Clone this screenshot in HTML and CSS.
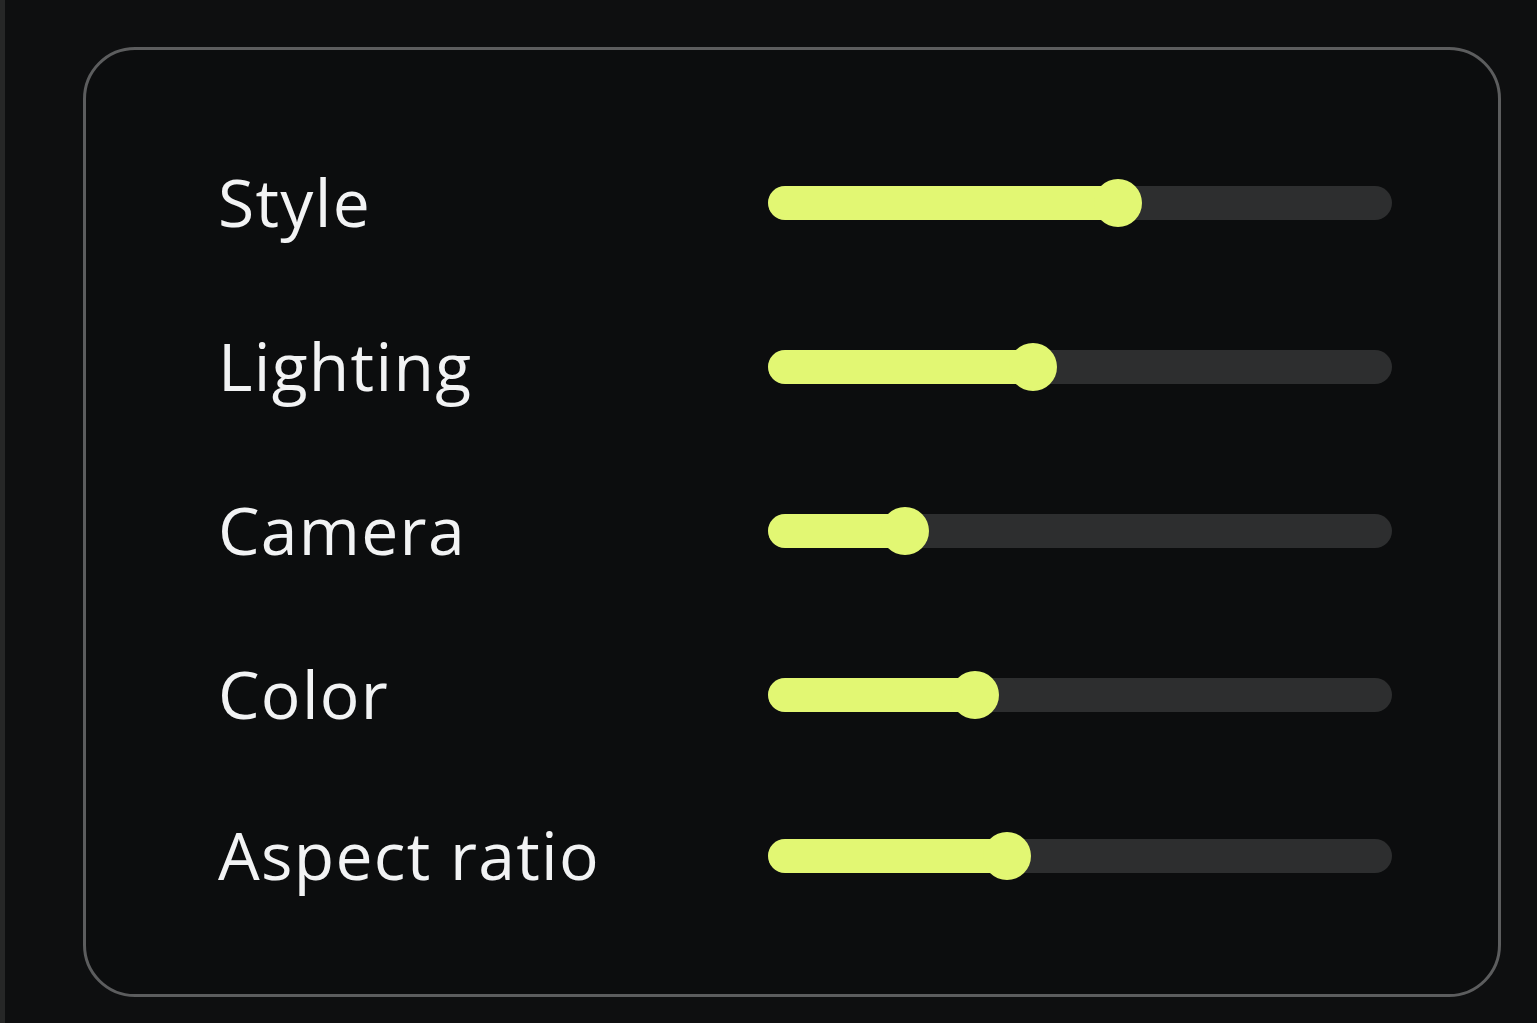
FILE: index.html
```html
<!DOCTYPE html>
<html lang="en">
<head>
<meta charset="utf-8">
<title>Sliders</title>
<link rel="stylesheet" href="styles.css">
</head>
<body>
<div class="page">
  <section class="card">
    <div class="row">
      <span class="label">Style</span>
      <div class="track"><div class="fill" style="width:56.1%"><span class="thumb"></span></div></div>
    </div>
    <div class="row">
      <span class="label">Lighting</span>
      <div class="track"><div class="fill" style="width:42.5%"><span class="thumb"></span></div></div>
    </div>
    <div class="row">
      <span class="label">Camera</span>
      <div class="track"><div class="fill" style="width:22%"><span class="thumb"></span></div></div>
    </div>
    <div class="row">
      <span class="label">Color</span>
      <div class="track"><div class="fill" style="width:33.2%"><span class="thumb"></span></div></div>
    </div>
    <div class="row row-last">
      <span class="label">Aspect ratio</span>
      <div class="track"><div class="fill" style="width:38.3%"><span class="thumb"></span></div></div>
    </div>
  </section>
</div>
</body>
</html>
```
FILE: styles.css
```css
html, body {
  margin: 0;
  padding: 0;
  background: #0e0f10;
}
body {
  width: 1537px;
  height: 1023px;
  overflow: hidden;
}
.page {
  box-sizing: border-box;
  height: 1023px;
  border-left: 5px solid #262727;
  padding: 47px 36px 0 78px;
}
.card {
  box-sizing: border-box;
  width: 1418px;
  height: 950px;
  border: 3px solid #5c5d5e;
  border-radius: 52px;
  background: #0c0d0e;
  padding: 71px 106px 0 132px;
  display: flex;
  flex-direction: column;
}
.row {
  height: 164px;
  display: grid;
  grid-template-columns: 550px 1fr;
  align-items: center;
}
.row-last {
  margin-top: -3px;
}
.label {
  font-family: "Open Sans", "Noto Sans", sans-serif;
  font-size: 66px;
  letter-spacing: 1.3px;
  color: #f2f3f4;
  line-height: 1;
  position: relative;
  top: -2px;
}
.track {
  position: relative;
  height: 34px;
  border-radius: 17px;
  background: #2d2e2f;
}
.fill {
  position: relative;
  height: 100%;
  border-radius: 17px 0 0 17px;
  background: #e2f773;
}
.thumb {
  position: absolute;
  right: -24px;
  top: -7px;
  width: 48px;
  height: 48px;
  border-radius: 50%;
  background: #e2f773;
}
```
